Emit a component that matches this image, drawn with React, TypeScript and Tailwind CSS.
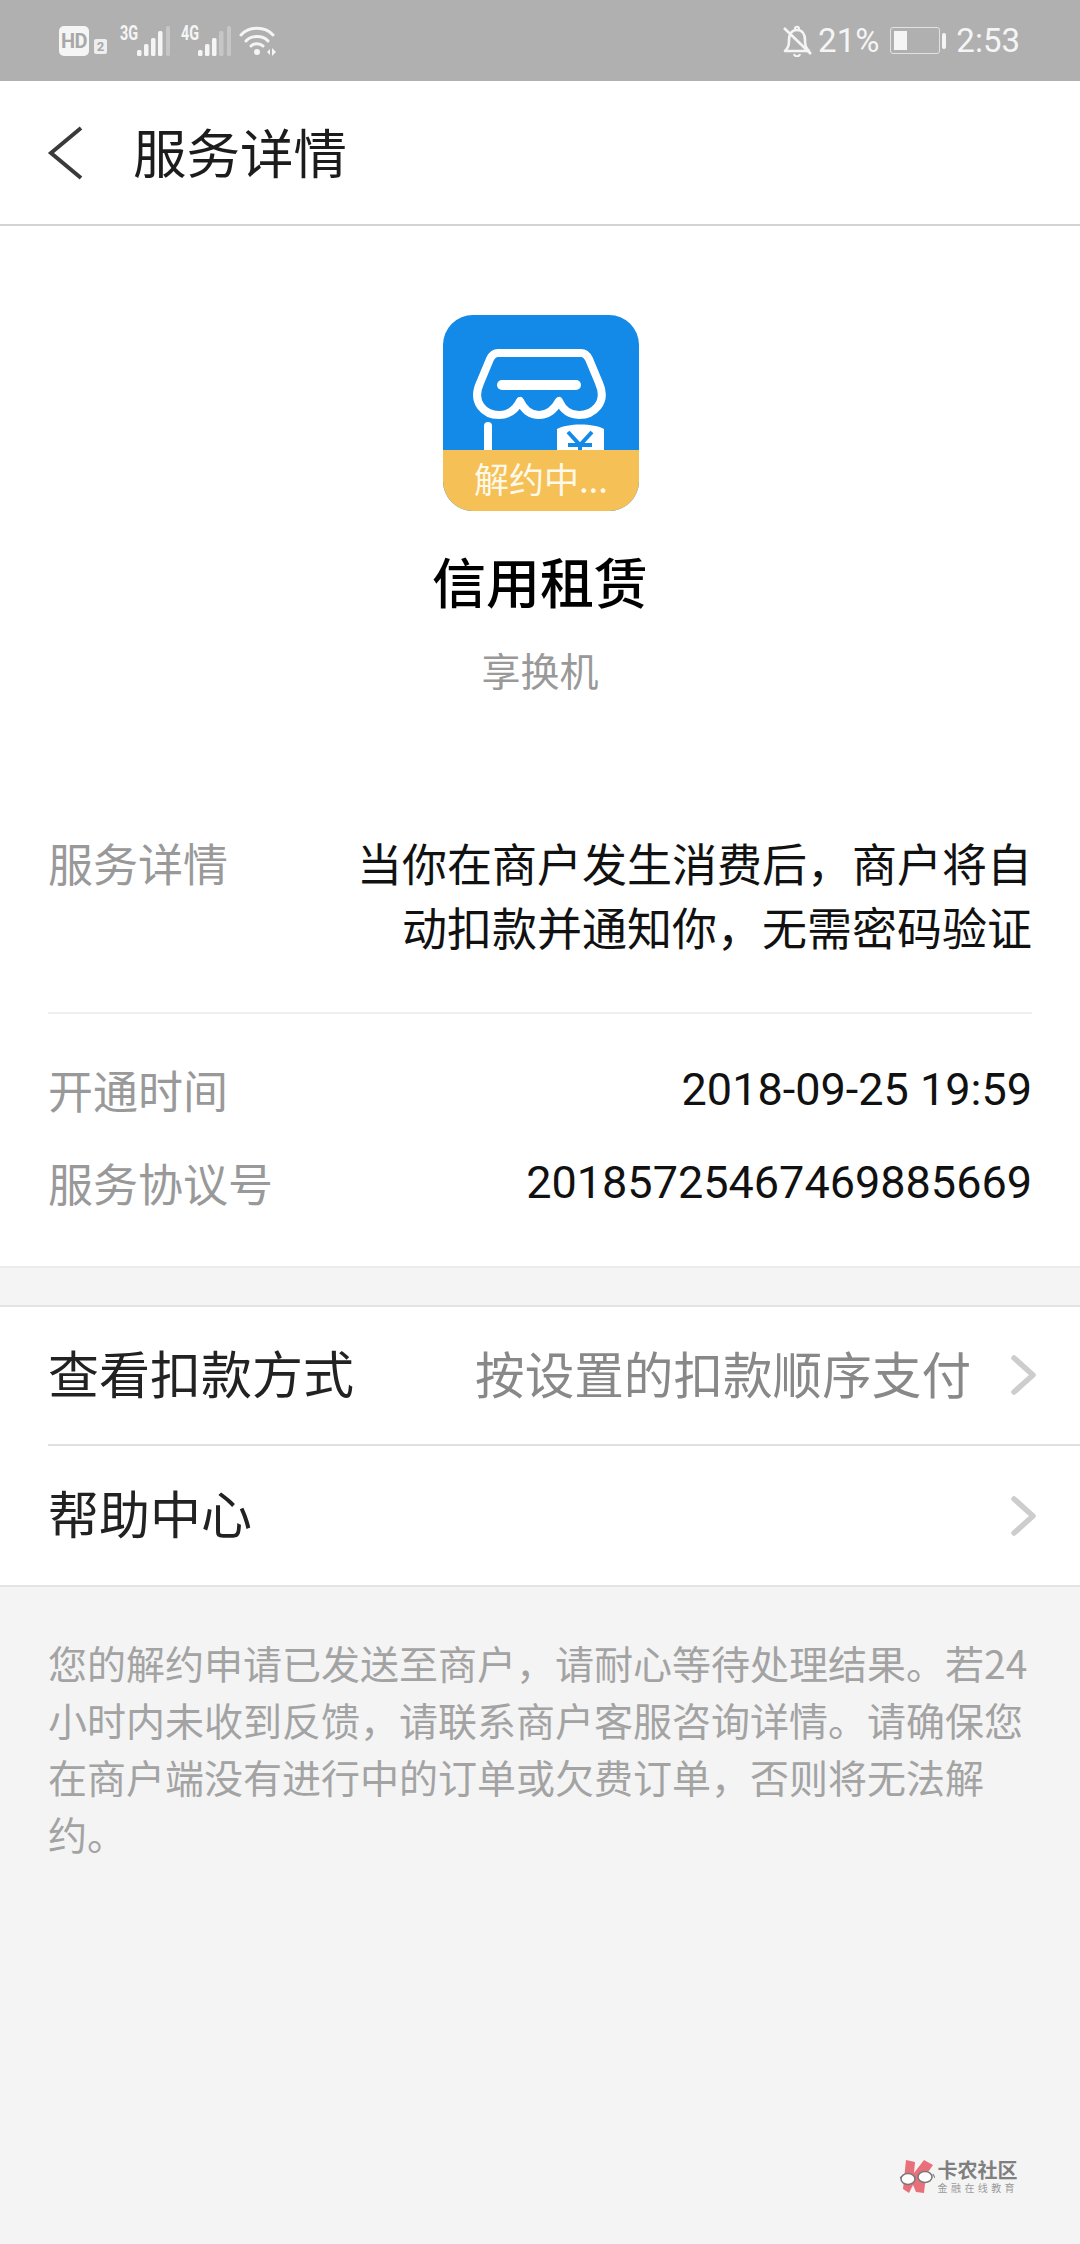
const cjk = "font-['Noto_Sans_CJK_SC','Noto_Sans',sans-serif]";

function Signal({ label, solid }: { label: string; solid: number }) {
  const bars = [
    { x: 17, y: 24, w: 4.5 },
    { x: 24, y: 18, w: 4.5 },
    { x: 31, y: 12, w: 4.5 },
    { x: 38, y: 5, w: 4.5 },
    { x: 46, y: 0, w: 4 },
  ];
  return (
    <div className="relative w-[50px] h-[30px]">
      <span className="absolute left-0 -top-[3px] text-[20px] leading-[20px] font-bold font-['Roboto',sans-serif] origin-left scale-x-[0.72] text-[#f5f5f5]">
        {label}
      </span>
      <svg width="51" height="30" viewBox="0 0 51 30" className="absolute left-0 top-0">
        {bars.map((b, i) => (
          <rect key={i} x={b.x} y={b.y} width={b.w} height={30 - b.y} rx="1.5" fill={i < solid ? "#f5f5f5" : "#c6c6c6"} />
        ))}
      </svg>
    </div>
  );
}

function StatusBar() {
  return (
    <div className="h-[81px] bg-[#b0b0b0] flex items-center justify-between pl-[59px] pr-[60px] text-[#f5f5f5]">
      <div className="flex items-center">
        <div className="w-[30px] h-[30px] rounded-[5px] bg-[#f5f5f5] flex items-center justify-center text-[#a8a8a8] text-[20px] font-bold font-['Roboto',sans-serif] tracking-[-0.5px]">
          HD
        </div>
        <div className="ml-[5px] w-[13px] h-[15px] mt-[11px] rounded-[2px] bg-[#eeeeee] flex items-center justify-center text-[#a8a8a8] text-[13px] leading-none font-bold font-['Roboto',sans-serif]">
          2
        </div>
        <div className="ml-[13px]">
          <Signal label="3G" solid={4} />
        </div>
        <div className="ml-[11px]">
          <Signal label="4G" solid={3} />
        </div>
        <svg width="38" height="32" viewBox="0 0 38 32" className="ml-[8px]">
          <path d="M2 10 C10 1 26 1 34 10" fill="none" stroke="#f5f5f5" strokeWidth="3" strokeLinecap="round" />
          <path d="M7 16 C12 10 24 10 29 16" fill="none" stroke="#f5f5f5" strokeWidth="3" strokeLinecap="round" />
          <path d="M12 21 C15 18 21 18 24 21" fill="none" stroke="#f5f5f5" strokeWidth="3" strokeLinecap="round" />
          <circle cx="18" cy="27" r="3" fill="#f5f5f5" />
          <path d="M28 27 L31 24 V30 Z M33 23 L37 27 L33 31 Z" fill="#f5f5f5" />
        </svg>
      </div>
      <div className="flex items-center font-['Roboto',sans-serif] text-[33px] leading-none">
        <svg width="30" height="32" viewBox="0 0 30 32" className="mr-[6px]">
          <path d="M3 26 C7 22 7 19 7 15 C7 9 10 5 15 5 C20 5 23 9 23 15 C23 19 23 22 27 26 Z" fill="none" stroke="#f5f5f5" strokeWidth="2.6" strokeLinejoin="round" />
          <path d="M13 4 C13 1 17 1 17 4 M12 29 C13 32 17 32 18 29" fill="none" stroke="#f5f5f5" strokeWidth="2.2" />
          <path d="M2 3 L29 29" stroke="#f5f5f5" strokeWidth="2.6" />
        </svg>
        <span>21%</span>
        <div className="ml-[11px] w-[50px] h-[27px] rounded-[3px] border-[1.5px] border-[#e2e2e2] p-[3px]">
          <div className="w-[13px] h-full bg-[#f5f5f5]" />
        </div>
        <div className="ml-[2px] w-[4px] h-[16px] rounded-[2px] bg-[#f5f5f5]" />
        <span className="ml-[10px]">2:53</span>
      </div>
    </div>
  );
}

function AppIcon() {
  return (
    <div className="relative ml-[2px] w-[196px] h-[196px] rounded-[30px] overflow-hidden bg-[#148ae8]">
      <svg width="196" height="196" viewBox="0 0 196 196" className="absolute left-0 top-0">
        <path
          d="M55 38 H138 C142 38 144 40 146 44 L156 68 C165 88 150 100 136 100 C127 100 120 95 116 86 C110 97 102 100 96 100 C90 100 82 97 77 86 C72 96 65 100 56 100 C42 100 28 88 37 68 L47 44 C49 40 51 38 55 38 Z"
          fill="none"
          stroke="#ffffff"
          strokeWidth="8"
          strokeLinejoin="round"
        />
        <rect x="54" y="65" width="84" height="10" rx="5" fill="#ffffff" />
        <rect x="41" y="107" width="8" height="60" rx="4" fill="#ffffff" />
        <path d="M114 114 C124 108 151 108 161 114 V170 H114 Z" fill="#ffffff" />
        <path d="M125 117 L137 130 L149 117 M137 130 V150 M125 130 H149 M125 139 H149" fill="none" stroke="#148ae8" strokeWidth="4" />
      </svg>
      <div className={`absolute left-0 right-0 bottom-0 h-[61px] bg-[#f5c055] text-[#fdf8e8] text-[35px] leading-[56px] text-center ${cjk}`}>
        解约中...
      </div>
    </div>
  );
}

function Chevron() {
  return (
    <svg width="26" height="40" viewBox="0 0 26 40" className="shrink-0">
      <path d="M3 3 L22 20 L3 37" fill="none" stroke="#cdcdcd" strokeWidth="5.5" strokeLinecap="round" strokeLinejoin="round" />
    </svg>
  );
}

function Logo() {
  return (
    <div className="flex items-center gap-[3px]">
      <svg width="36" height="35" viewBox="0 0 36 35">
        <path d="M7 1 L16 3 L15 14 L25 1 L34 6 L27 16 L25 34 L17 33 L14 26 L10 34 L4 30 Z" fill="#e8707a" />
        <path d="M1 19 L5 16 M34 15 L36 19" stroke="#888888" strokeWidth="1.2" />
        <ellipse cx="9" cy="20" rx="7" ry="5.5" fill="#ffffff" stroke="#777777" strokeWidth="1.5" />
        <ellipse cx="26" cy="18" rx="7" ry="5.5" fill="#ffffff" stroke="#777777" strokeWidth="1.5" />
      </svg>
      <div className={`flex flex-col ${cjk}`}>
        <span className="text-[20px] leading-[22px] font-bold text-[#7f7f7f]">卡农社区</span>
        <span className="text-[10px] leading-[13px] tracking-[3.4px] text-[#9a9a9a]">金融在线教育</span>
      </div>
    </div>
  );
}

export default function App() {
  return (
    <div className={`w-[1080px] h-[2244px] flex flex-col bg-[#f4f4f4] overflow-hidden ${cjk}`}>
      <StatusBar />
      <div className="h-[145px] bg-white border-b-[2px] border-[#d4d4d4] flex items-center pl-[47px] shrink-0">
        <svg width="36" height="54" viewBox="0 0 36 54">
          <path d="M34 2 L4 27 L34 52" fill="none" stroke="#3a3a3a" strokeWidth="4" />
        </svg>
        <h1 className="ml-[50px] mb-[4px] text-[53.5px] leading-none font-normal text-[#1c1c1c]">服务详情</h1>
      </div>

      <div className="bg-white h-[1042px] border-b-[2px] border-[#ececec] flex flex-col items-center pt-[89px] px-[48px] shrink-0">
        <AppIcon />
        <div className="mt-[35px] text-[54px] leading-[70px] font-medium text-black">信用租赁</div>
        <div className="mt-[28px] text-[39px] leading-[50px] text-[#999999]">享换机</div>

        <div className="w-full mt-[137px] pb-[53px] border-b-[2px] border-[#efefef] flex justify-between leading-[64px]">
          <span className="text-[#999999] text-[45px] shrink-0">服务详情</span>
          <span className="w-[690px] text-right text-[#111111] text-[45px]">
            当你在商户发生消费后，商户将自动扣款并通知你，无需密码验证
          </span>
        </div>
        <div className="w-full mt-[44px] flex justify-between items-center text-[45px] leading-[64px]">
          <span className="text-[#999999]">开通时间</span>
          <span className="text-[#111111] font-['Roboto',sans-serif]">2018-09-25 19:59</span>
        </div>
        <div className="w-full mt-[29px] flex justify-between items-center text-[45px] leading-[64px]">
          <span className="text-[#999999]">服务协议号</span>
          <span className="text-[#111111] font-['Roboto',sans-serif]">20185725467469885669</span>
        </div>
      </div>

      <div className="mt-[37px] bg-white border-y-[2px] border-[#e4e4e4] shrink-0">
        <div className="h-[139px] ml-[48px] pr-[43px] flex items-center justify-between border-b-[2px] border-[#e0e0e0]">
          <span className="mb-[6px] text-[51px] text-[#222222]">查看扣款方式</span>
          <div className="flex items-center gap-[40px]">
            <span className="mb-[6px] text-[49.6px] text-[#888888]">按设置的扣款顺序支付</span>
            <Chevron />
          </div>
        </div>
        <div className="h-[139px] ml-[48px] pr-[43px] flex items-center justify-between">
          <span className="mb-[6px] text-[51px] text-[#222222]">帮助中心</span>
          <Chevron />
        </div>
      </div>

      <p className="mt-[47px] px-[48px] text-[39px] leading-[57px] text-[#a3a3a3]">
        您的解约申请已发送至商户，请耐心等待处理结果。若24小时内未收到反馈，请联系商户客服咨询详情。请确保您在商户端没有进行中的订单或欠费订单，否则将无法解约。
      </p>

      <div className="mt-auto mb-[50px] pr-[62px] flex justify-end">
        <Logo />
      </div>
    </div>
  );
}
